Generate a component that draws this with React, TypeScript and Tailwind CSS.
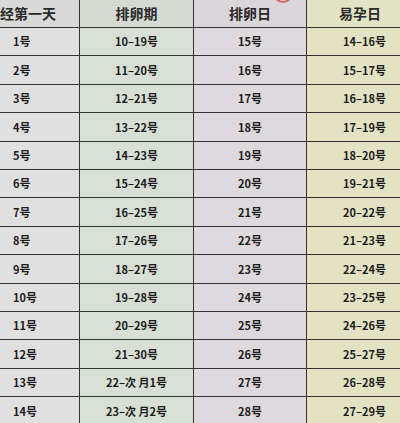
const rows: [string, string, string, string][] = [
  ["1号", "10–19号", "15号", "14–16号"],
  ["2号", "11–20号", "16号", "15–17号"],
  ["3号", "12–21号", "17号", "16–18号"],
  ["4号", "13–22号", "18号", "17–19号"],
  ["5号", "14–23号", "19号", "18–20号"],
  ["6号", "15–24号", "20号", "19–21号"],
  ["7号", "16–25号", "21号", "20–22号"],
  ["8号", "17–26号", "22号", "21–23号"],
  ["9号", "18–27号", "23号", "22–24号"],
  ["10号", "19–28号", "24号", "23–25号"],
  ["11号", "20–29号", "25号", "24–26号"],
  ["12号", "21–30号", "26号", "25–27号"],
  ["13号", "22–次 月1号", "27号", "26–28号"],
  ["14号", "23–次 月2号", "28号", "27–29号"],
];

const font = {
  fontFamily: '"Noto Sans CJK SC", "Liberation Sans", sans-serif',
};

function App() {
  return (
    <div className="relative h-[423px] w-[400px] overflow-hidden bg-[#dedede]" style={font}>
      <div className="absolute left-[273px] top-[-17px] h-[20px] w-[20px] rounded-full border-2 border-[#e0606a]"></div>
      <div className="grid w-[430px] grid-cols-[80px_114px_113px_123px] text-[#1c1c1c]">
        <div className="flex h-[28px] items-center border-b border-r border-[#333] bg-[#d9d9d9] text-[14px] font-semibold text-[#2a2a2a]">
          经第一天
        </div>
        <div className="flex h-[28px] items-center justify-center border-b border-r border-[#333] bg-[#d5dbd2] text-[14px] font-semibold text-[#2a2a2a]">
          排卵期
        </div>
        <div className="flex h-[28px] items-center justify-center border-b border-r border-[#333] bg-[#dad6d9] text-[14px] font-semibold text-[#2a2a2a]">
          排卵日
        </div>
        <div className="flex h-[28px] items-center border-b border-[#333] bg-[#e2e3c5] pl-[32px] text-[14px] font-semibold text-[#2a2a2a]">
          易孕日
        </div>
        {rows.map((r, i) => (
          <div key={i} className="contents">
            <div className="flex h-[28.4px] items-center border-b border-r border-[#333] bg-[#e0e0e0] pl-[13px] text-[11px] font-bold">
              {r[0]}
            </div>
            <div className="flex h-[28.4px] items-center justify-center border-b border-r border-[#333] bg-[#d8dfd5] text-[11px] font-bold">
              {r[1]}
            </div>
            <div className="flex h-[28.4px] items-center justify-center border-b border-r border-[#333] bg-[#ddd9dc] text-[11px] font-bold">
              {r[2]}
            </div>
            <div className="flex h-[28.4px] items-center border-b border-[#333] bg-[#e3e3c4] pl-[36px] text-[11px] font-bold">
              {r[3]}
            </div>
          </div>
        ))}
      </div>
    </div>
  );
}

export default App;
